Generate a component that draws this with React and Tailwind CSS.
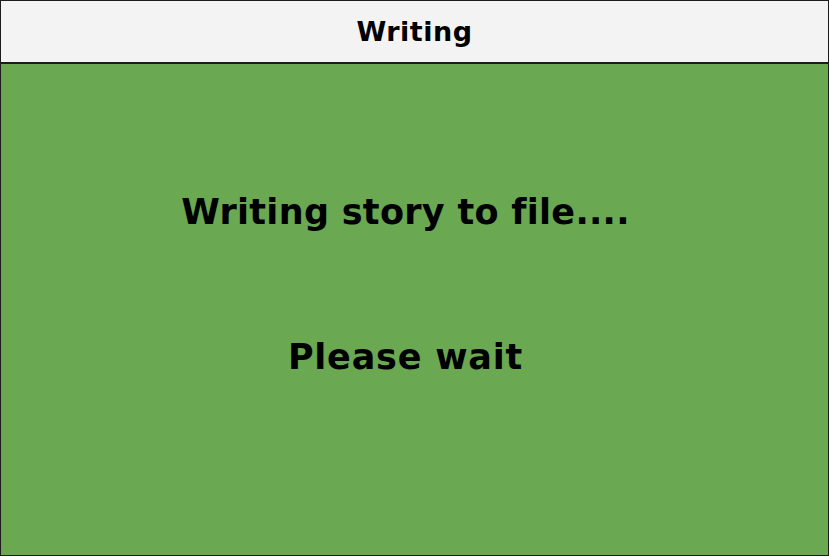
export default function App() {
  return (
    <div className="w-[829px] h-[556px] flex flex-col border border-[#1c1c1c] bg-[#6aa851] font-['DejaVu_Sans',sans-serif] text-black">
      <div className="h-[63px] shrink-0 flex items-center justify-center bg-[#f3f3f3] border-b-2 border-[#1c1c1c]">
        <h1 className="text-[27px] font-bold leading-none tracking-[0.5px]">Writing</h1>
      </div>
      <div className="flex-1 flex flex-col items-center pt-[131px] pr-[18px] gap-[110px]">
        <p className="text-[35px] font-bold leading-none tracking-[0.3px]">Writing story to file....</p>
        <p className="text-[35px] font-bold leading-none tracking-[0.8px]">Please wait</p>
      </div>
    </div>
  );
}
